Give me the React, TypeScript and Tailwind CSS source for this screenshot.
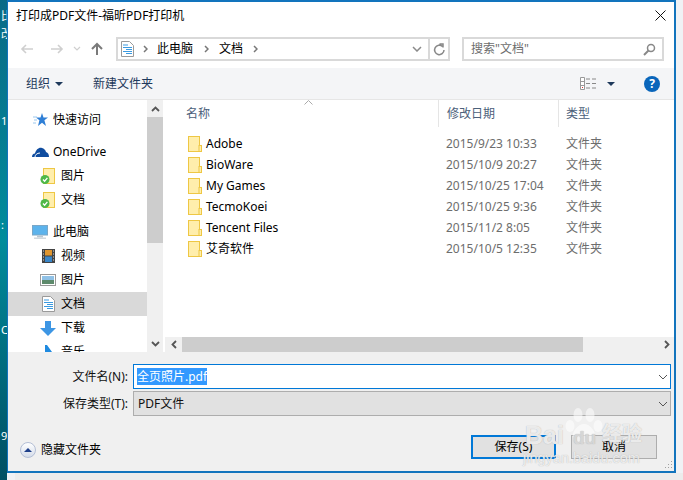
import type { ReactNode } from "react";

const font = "font-['Noto_Sans','Noto_Sans_CJK_SC',sans-serif]";

function Folder() {
  return (
    <svg width="14" height="16" viewBox="0 0 14 16" className="shrink-0">
      <rect x="0.5" y="0.5" width="11" height="15" fill="#ffeeac" stroke="#eec744" />
      <rect x="11" y="9.5" width="2.5" height="6" fill="#ffeeac" stroke="#eec744" />
    </svg>
  );
}

function SyncFolder() {
  return (
    <svg width="16" height="17" viewBox="0 0 16 17">
      <rect x="3.5" y="0.5" width="11" height="15" fill="#ffeeac" stroke="#eec744" />
      <circle cx="5" cy="11.5" r="4.5" fill="#4eb848" />
      <path d="M3 11.5l1.6 1.7 2.8-3.4" fill="none" stroke="#fff" strokeWidth="1.3" />
    </svg>
  );
}

function DocIcon() {
  return (
    <svg width="13" height="16" viewBox="0 0 13 16">
      <path d="M.5.5h8l4 4v11H.5z" fill="#fff" stroke="#9a9a9a" />
      <path d="M2 4h5M2 6.5h9M5 8.5h6M2 10.5h9M5 12.5h6" stroke="#3b9ae0" />
    </svg>
  );
}

function Crumb() {
  return (
    <svg width="5" height="8" viewBox="0 0 5 8" className="shrink-0">
      <path d="M1 1l3 3-3 3" fill="none" stroke="#777" strokeWidth="1.5" />
    </svg>
  );
}

function NavItem({ icon, label, indent, active, mt }: { icon: ReactNode; label: string; indent?: boolean; active?: boolean; mt?: boolean }) {
  return (
    <div className={`flex h-6 shrink-0 items-center ${active ? "bg-[#d9d9d9]" : ""} ${mt ? "mt-2" : ""}`}>
      <div className={`flex justify-center ${indent ? "ml-[29px] w-[22px]" : "ml-[22px] w-5"}`}>{icon}</div>
      <span className={`text-[12px] text-black ${indent ? "ml-[2px]" : "ml-[3px]"}`}>{label}</span>
    </div>
  );
}

const files = [
  ["Adobe", "2015/9/23 10:33"],
  ["BioWare", "2015/10/9 20:27"],
  ["My Games", "2015/10/25 17:04"],
  ["TecmoKoei", "2015/10/25 9:36"],
  ["Tencent Files", "2015/11/2 8:05"],
  ["艾奇软件", "2015/10/5 12:35"],
];

export default function App() {
  return (
    <div className={`relative flex h-[480px] w-[683px] overflow-hidden bg-[#f0f2f5] ${font}`}>
      {/* desktop behind the dialog */}
      <div className="flex h-full w-[7px] shrink-0 flex-col overflow-hidden bg-gradient-to-b from-[#0a6a86] via-[#008c9c] to-[#004f63] pl-[1px] text-[11px] leading-[14px] text-white">
        <span className="mt-[9px]">比</span>
        <span className="mt-[4px]">改</span>
        <span className="mt-[73px]">1</span>
        <span className="mt-[90px]">:</span>
        <span className="mt-[91px]">C</span>
        <span className="mt-[92px]">9</span>
      </div>

      <div className="flex h-[473px] w-[669px] shrink-0 flex-col border-t-2 border-r-2 border-b-2 border-l border-[#1274bd] bg-white">
        {/* title */}
        <div className="flex h-[27px] shrink-0 items-center justify-between pl-2 pr-[8px]">
          <span className="text-[12px] text-black">打印成PDF文件-福昕PDF打印机</span>
          <svg width="11" height="11" viewBox="0 0 11 11">
            <path d="M.5.5l10 10M10.5.5l-10 10" stroke="#111" />
          </svg>
        </div>

        {/* nav */}
        <div className="mt-2 flex h-[24px] shrink-0 items-center">
          <div className="ml-[12px] flex w-[96px] items-center">
            <svg width="14" height="12" viewBox="0 0 14 12"><path d="M13 6H2M6 2L2 6l4 4" fill="none" stroke="#cfcfcf" strokeWidth="1.6" /></svg>
            <svg width="14" height="12" viewBox="0 0 14 12" className="ml-4"><path d="M1 6h11M8 2l4 4-4 4" fill="none" stroke="#cfcfcf" strokeWidth="1.6" /></svg>
            <svg width="8" height="6" viewBox="0 0 8 6" className="ml-[9px]"><path d="M1 1l3 3 3-3" fill="none" stroke="#cfcfcf" strokeWidth="1.2" /></svg>
            <svg width="14" height="14" viewBox="0 0 14 14" className="ml-[9px]"><path d="M7 13V2M2 7l5-5 5 5" fill="none" stroke="#7a7a7a" strokeWidth="2" /></svg>
          </div>
          <div className="flex h-[24px] w-[334px] items-center border-2 border-[#d9d9d9]">
            <div className="ml-[3px]"><DocIcon /></div>
            <div className="ml-[9px]"><Crumb /></div>
            <span className="ml-[9px] text-[12px] text-black">此电脑</span>
            <div className="ml-[11px]"><Crumb /></div>
            <span className="ml-[10px] text-[12px] text-black">文档</span>
            <div className="ml-[10px]"><Crumb /></div>
            <div className="flex-1" />
            <svg width="10" height="6" viewBox="0 0 10 6" className="mr-[6px]"><path d="M1 1l4 4 4-4" fill="none" stroke="#8a8a8a" strokeWidth="1.5" /></svg>
            <div className="flex h-full w-5 items-center justify-center border-l-2 border-[#d9d9d9]">
              <svg width="12" height="13" viewBox="0 0 12 13"><path d="M9.5 3.5A4.7 4.7 0 1 0 11 7M6.5 1h3.5v3.5" fill="none" stroke="#888" strokeWidth="1.5" /></svg>
            </div>
          </div>
          <div className="ml-[12px] flex h-[24px] w-[202px] items-center justify-between border-2 border-[#d9d9d9] pl-[7px] pr-[6px]">
            <span className="text-[12px] text-[#6d6d6d]">搜索"文档"</span>
            <svg width="13" height="13" viewBox="0 0 13 13"><circle cx="8" cy="5" r="3.5" fill="none" stroke="#888" strokeWidth="1.5" /><path d="M5.5 7.5L1 12" stroke="#888" strokeWidth="2" /></svg>
          </div>
        </div>

        {/* toolbar */}
        <div className="mt-[7px] flex h-[31px] shrink-0 items-center bg-[#f4f5f7]">
          <span className="ml-[18px] text-[12px] text-[#1e395b]">组织</span>
          <svg width="8" height="4" viewBox="0 0 8 4" className="ml-[5px]"><path d="M0 0h8L4 4z" fill="#1e395b" /></svg>
          <span className="ml-[30px] text-[12px] text-[#1e395b]">新建文件夹</span>
          <div className="flex-1" />
          <svg width="17" height="13" viewBox="0 0 17 13">
            <path d="M.5.5h4v12h-4zM.5 4.5h4M.5 8.5h4" fill="#fff" stroke="#999" />
            <path d="M6 2h4M12 2h4M6 6.5h4M12 6.5h4M6 11h4M12 11h4" stroke="#888" />
            <rect x="2" y="10" width="1" height="1" fill="#d33" />
          </svg>
          <svg width="8" height="4" viewBox="0 0 8 4" className="ml-[10px]"><path d="M0 0h8L4 4z" fill="#1e395b" /></svg>
          <div className="ml-[29px] mr-[14px] flex h-4 w-4 items-center justify-center rounded-full bg-[#0a66bb] text-[12px] font-bold text-white">?</div>
        </div>

        {/* panes */}
        <div className="flex h-[253px] shrink-0 border-t border-[#e6e6e6]">
          <div className="flex h-full w-[139px] shrink-0 flex-col overflow-hidden pt-[8px]">
            <NavItem label="快速访问" icon={<svg width="15" height="14" viewBox="0 0 15 14"><path d="M9 0l1.5 4.5H15l-3.6 2.8L13 13 9 9.8 5 13l1.4-5.7L3 4.5h4.5z" fill="#2f7fd6" /><path d="M0 4h4M1 7h3M0 10h3" stroke="#9cc8ee" /></svg>} />
            <NavItem mt label="OneDrive" icon={<svg width="17" height="10" viewBox="0 0 17 10"><path d="M0 10c0-2 1-3.500 3-3.500C4 2.500 7 0 10 1c2 .5 3.500 2 4 4 2 .5 3 2.500 3 5z" fill="#0f4c9f" /><path d="M3 10c0-2 2-4 5-4" fill="none" stroke="#fff" /></svg>} />
            <NavItem indent label="图片" icon={<SyncFolder />} />
            <NavItem indent label="文档" icon={<SyncFolder />} />
            <NavItem mt label="此电脑" icon={<svg width="16" height="14" viewBox="0 0 16 14"><rect x=".5" y=".5" width="15" height="9.500" fill="#5cb3ec" stroke="#7aa7c7" /><rect x="5" y="10.500" width="6" height="2" fill="#b9c7d1" /><rect x="2" y="12.500" width="12" height="1.500" fill="#d0d8de" /></svg>} />
            <NavItem indent label="视频" icon={<svg width="13" height="14" viewBox="0 0 13 14"><rect width="13" height="14" fill="#444" /><rect x="3" y="1" width="7" height="5.500" fill="#e0962f" /><rect x="3" y="7.500" width="7" height="5.500" fill="#3a86c8" /><path d="M1 2h1M1 5h1M1 8h1M1 11h1M11 2h1M11 5h1M11 8h1M11 11h1" stroke="#ddd" /></svg>} />
            <NavItem indent label="图片" icon={<svg width="16" height="12" viewBox="0 0 16 12"><rect x=".5" y=".5" width="15" height="11" fill="#fff" stroke="#999" /><rect x="2" y="2" width="12" height="4" fill="#8fc1e6" /><rect x="2" y="6" width="12" height="4" fill="#5d8a6c" /></svg>} />
            <NavItem indent active label="文档" icon={<DocIcon />} />
            <NavItem indent label="下载" icon={<svg width="16" height="15" viewBox="0 0 16 15"><path d="M5 0h6v7h5l-8 8-8-8h5z" fill="#3d96e4" /></svg>} />
            <NavItem indent label="音乐" icon={<svg width="8" height="14" viewBox="0 0 8 14"><path d="M1 0h2l5 7H4v7H1z" fill="#1f8ae0" /></svg>} />
          </div>

          {/* sidebar scrollbar */}
          <div className="flex h-full w-[16px] shrink-0 flex-col bg-[#f0f0f0]">
            <div className="flex h-[17px] items-center justify-center">
              <svg width="9" height="6" viewBox="0 0 9 6"><path d="M1 5l3.500-3.500L8 5" fill="none" stroke="#555" strokeWidth="1.800" /></svg>
            </div>
            <div className="h-[126px] bg-[#cdcdcd]" />
            <div className="flex-1" />
            <div className="flex h-[17px] items-center justify-center">
              <svg width="9" height="6" viewBox="0 0 9 6"><path d="M1 1l3.500 3.500L8 1" fill="none" stroke="#555" strokeWidth="1.800" /></svg>
            </div>
          </div>

          <div className="flex min-w-0 flex-1 flex-col pl-[2px]">
            {/* column headers */}
            <div className="relative flex h-[27px] shrink-0 text-[12px] text-[#4c607a]">
              <div className="w-[274px] border-r border-[#e5e5e5] pl-[21px] leading-[27px]">名称</div>
              <div className="w-[120px] border-r border-[#e5e5e5] pl-[8px] leading-[27px]">修改日期</div>
              <div className="pl-[7px] leading-[27px]">类型</div>
              <svg width="9" height="5" viewBox="0 0 9 5" className="absolute left-[139px] top-0"><path d="M.5 4.500l4-4 4 4" fill="none" stroke="#aaa" /></svg>
            </div>
            {/* files */}
            <div className="flex-1 pt-[6px]">
              {files.map(([name, date]) => (
                <div key={name} className="flex h-[21px] items-center text-[12px]">
                  <div className="ml-[23px]"><Folder /></div>
                  <span className="ml-[4px] w-[240px] text-black">{name}</span>
                  <span className="w-[120px] text-[#6d6d6d]">{date}</span>
                  <span className="text-[#6d6d6d]">文件夹</span>
                </div>
              ))}
            </div>
            {/* horizontal scrollbar */}
            <div className="flex h-[15px] shrink-0 items-center bg-[#f0f0f0]">
              <div className="flex w-[17px] justify-center">
                <svg width="6" height="9" viewBox="0 0 6 9"><path d="M5 1L1.500 4.500 5 8" fill="none" stroke="#555" strokeWidth="1.800" /></svg>
              </div>
              <div className="h-full w-[401px] bg-[#cdcdcd]" />
              <div className="flex-1" />
              <div className="flex w-[15px] justify-center">
                <svg width="6" height="9" viewBox="0 0 6 9"><path d="M1 1l3.500 3.500L1 8" fill="none" stroke="#555" strokeWidth="1.800" /></svg>
              </div>
            </div>
          </div>
        </div>

        {/* form */}
        <div className="relative flex flex-1 flex-col bg-[#f0f0f0] pt-[12px]">
          <div className="flex h-[25px] items-center">
            <span className="w-[120px] text-right text-[12px] text-[#111]">文件名(N):</span>
            <div className="ml-[5px] flex h-[25px] w-[538px] items-center justify-between border-[1.500px] border-[#0078d7] bg-white pl-[3px] pr-[2px]">
              <span className="bg-[#3399ff] text-[12px] leading-[17px] text-white">全页照片.pdf</span>
              <svg width="10" height="6" viewBox="0 0 10 6"><path d="M1 1l4 4 4-4" fill="none" stroke="#555" /></svg>
            </div>
          </div>
          <div className="mt-[2px] flex h-[25px] items-center">
            <span className="w-[120px] text-right text-[12px] text-[#111]">保存类型(T):</span>
            <div className="ml-[5px] flex h-[25px] w-[538px] items-center justify-between border border-[#adadad] bg-[#e1e1e1] pl-[4px] pr-[2px]">
              <span className="text-[12px] text-[#111]">PDF文件</span>
              <svg width="10" height="6" viewBox="0 0 10 6"><path d="M1 1l4 4 4-4" fill="none" stroke="#555" /></svg>
            </div>
          </div>
          <div className="mt-[18px] flex items-center">
            <div className="ml-[12px] mt-[7px] flex h-[16px] w-[16px] items-center justify-center rounded-full border border-[#b4bfd6] bg-gradient-to-b from-white to-[#d5dcea]">
              <svg width="8" height="4" viewBox="0 0 8 4"><path d="M0 4h8L4 0z" fill="#1e3f8a" /></svg>
            </div>
            <span className="ml-[5px] mt-[7px] text-[12px] text-black">隐藏文件夹</span>
            <div className="flex-1" />
            <div className="flex h-[24px] w-[85px] items-center justify-center border-2 border-[#0078d7] bg-[#e1e1e1] text-[12px] text-black">保存(S)</div>
            <div className="ml-[15px] mr-[17px] flex h-[24px] w-[86px] items-center justify-center border border-[#adadad] bg-[#e1e1e1] text-[12px] text-black">取消</div>
          </div>
          {/* resize grip */}
          <svg width="10" height="10" viewBox="0 0 10 10" className="absolute bottom-[1px] right-[1px]">
            <path d="M8 1h1v1H8zM5 4h1v1H5zM8 4h1v1H8zM2 7h1v1H2zM5 7h1v1H5zM8 7h1v1H8z" fill="#a0a0a0" />
          </svg>
        </div>
      </div>

      {/* bottom strip under the dialog */}
      <div className="absolute bottom-0 left-[15px] h-[7px] w-[668px] bg-[#ececec]" />

      {/* baidu watermark */}
      <div className="pointer-events-none absolute left-[523px] top-[404px] h-[76px] w-[130px] font-['Liberation_Sans',sans-serif] text-white/75 [text-shadow:0_0_1px_#aaa]">
        <svg width="38" height="40" viewBox="0 0 38 40" className="absolute left-[42px] top-[3px]" fill="#fff" fillOpacity="0.55">
          <ellipse cx="13" cy="8" rx="4.500" ry="7" />
          <ellipse cx="25" cy="8" rx="4.500" ry="7" />
          <ellipse cx="5" cy="19" rx="4.500" ry="6" />
          <ellipse cx="33" cy="19" rx="4.500" ry="6" />
          <path d="M19 17c-6 0-13 8-11 15 2 5 7 3 11 3s9 2 11-3c2-7-5-15-11-15z" />
        </svg>
        <span className="absolute left-[2px] top-[16px] text-[25px] font-bold leading-[30px]">Bai</span>
        <span className="absolute left-[50px] top-[22px] text-[19px] font-bold leading-[24px] text-[#dcdcdc]/90">du</span>
        <span className="absolute left-[79px] top-[16px] font-['Noto_Sans_CJK_SC',sans-serif] text-[20px] font-bold leading-[26px]">经验</span>
        <span className="absolute left-0 top-[45px] whitespace-nowrap text-[14.500px] leading-[18px]">jingyan.baidu.com</span>
      </div>
    </div>
  );
}
